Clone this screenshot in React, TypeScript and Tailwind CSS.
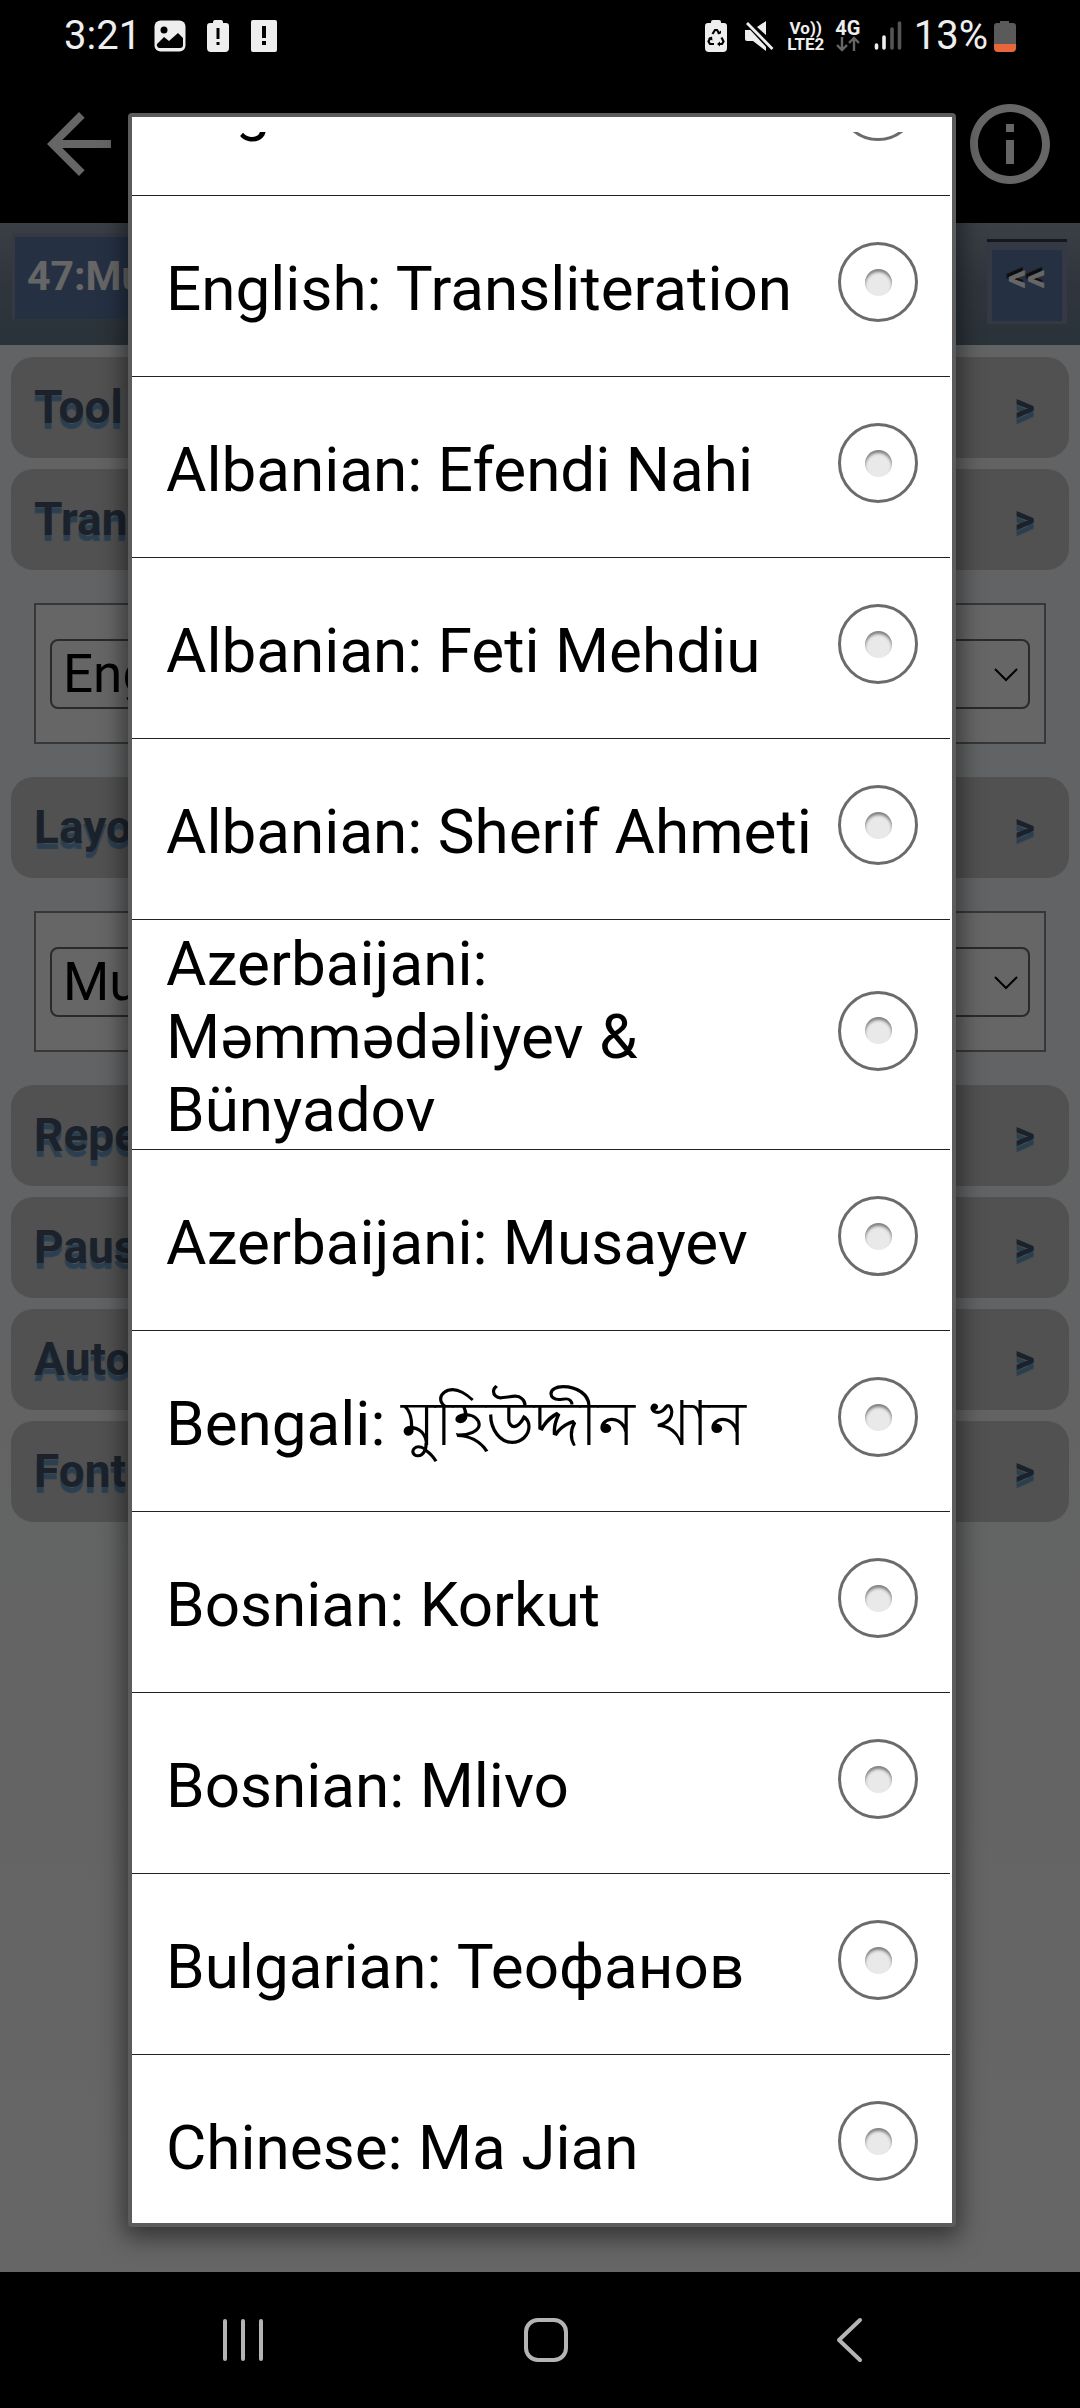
import { useLayoutEffect, useRef, useState } from 'react';

const translations = [
  'English: Shakir',
  'English: Transliteration',
  'Albanian: Efendi Nahi',
  'Albanian: Feti Mehdiu',
  'Albanian: Sherif Ahmeti',
  'Azerbaijani: Məmmədəliyev & Bünyadov',
  'Azerbaijani: Musayev',
  'Bengali: মুহিউদ্দীন খান',
  'Bosnian: Korkut',
  'Bosnian: Mlivo',
  'Bulgarian: Теофанов',
  'Chinese: Ma Jian',
];

function StatusBar() {
  return (
    <div className="flex h-20 items-center justify-between bg-black pl-16 pr-16 pb-2 text-[40px] leading-none text-[#eeeeee]">
      <div className="flex items-center">
        <span className="w-[90px]">3:21</span>
        <svg className="mr-5 size-8" viewBox="0 0 32 32" fill="none">
          <rect x="0.5" y="0.5" width="31" height="31" rx="6" fill="#eee" />
          <circle cx="10" cy="10" r="3.5" fill="#000" />
          <path d="M3 24l7-7 5 4 9-8 5 5v7a3 3 0 0 1-3 3H6a3 3 0 0 1-3-4z" fill="#000" />
        </svg>
        <svg className="mr-5 h-8 w-6" viewBox="0 0 24 32">
          <path d="M7 3V2a2 2 0 0 1 2-2h6a2 2 0 0 1 2 2v1h3a3 3 0 0 1 3 3v22a4 4 0 0 1-4 4H5a4 4 0 0 1-4-4V6a3 3 0 0 1 3-3z" fill="#eee" />
          <path d="M10.5 8h3v11h-3zM10.5 22h3v3h-3z" fill="#000" />
        </svg>
        <svg className="h-[34px] w-7" viewBox="0 0 28 34">
          <rect x="1" y="1" width="26" height="32" rx="2" fill="#eee" />
          <path d="M12 7h4v12h-4zM12 22h4v4h-4z" fill="#000" />
        </svg>
      </div>
      <div className="flex items-center">
        <svg className="mr-4 h-8 w-6" viewBox="0 0 24 32">
          <path d="M7 3V2a2 2 0 0 1 2-2h6a2 2 0 0 1 2 2v1h3a3 3 0 0 1 3 3v22a4 4 0 0 1-4 4H5a4 4 0 0 1-4-4V6a3 3 0 0 1 3-3z" fill="#eee" />
          <path d="M8.5 14l2.5-4h2l2.500 4M17.500 17.500l2 4-1.500 2.500h-4M10 24H6l-1.500-2.500 2-4" fill="none" stroke="#000" strokeWidth="2.200" />
          <path d="M13 13.500h4v-3zM16 21.500v5l-3-2.500zM4 18.500l4-2 .5 4z" fill="#000" />
        </svg>
        <svg className="mr-3 h-8 w-[30px]" viewBox="0 0 30 32">
          <path d="M1 10h6l1.500-1L22 22v9L9 21H3a2 2 0 0 1-2-2zM22 1v14L13 7z" fill="#eee" />
          <path d="M3 2l25 27" stroke="#000" strokeWidth="6" />
          <path d="M3 3l25.500 26" stroke="#eee" strokeWidth="2.800" />
        </svg>
        <span className="mr-2 flex w-10 flex-col items-center text-[17px] leading-[16px] font-bold">
          <span>Vo))</span>
          <span>LTE2</span>
        </span>
        <span className="mr-3 flex w-7 flex-col items-center text-[20px] leading-[16px] font-bold">
          <span>4G</span>
          <svg className="h-4 w-6" viewBox="0 0 24 16" fill="none" stroke="#666" strokeWidth="2.400">
            <path d="M6 1v12M1 9l5 5 5-5M18 15V3M13 7l5-5 5 5" />
          </svg>
        </span>
        <svg className="mr-3 h-[30px] w-7" viewBox="0 0 28 30" strokeLinecap="round" strokeWidth="3.600">
          <path d="M2.500 24v3M10 16v11" stroke="#eee" />
          <path d="M18 8v19M25.500 2v25" stroke="#555" />
        </svg>
        <span className="mr-[6px]">13%</span>
        <svg className="h-8 w-[22px]" viewBox="0 0 22 32">
          <path d="M6 3V1h9v2h4a3 3 0 0 1 3 3v18H0V6a3 3 0 0 1 3-3z" fill="#5a5a5a" />
          <path d="M0 24h22v4a4 4 0 0 1-4 4H4a4 4 0 0 1-4-4z" fill="#e8663c" />
        </svg>
      </div>
    </div>
  );
}

function SectionBar({ title }: { title: string }) {
  return (
    <button
      type="button"
      className="flex h-[101px] w-full items-center justify-between rounded-[22px] bg-[#cbcbcb] pr-[34px] pl-[23px] text-left text-[46px] font-bold text-[#46566e] [text-shadow:0_6px_1px_#6c9ec8]"
    >
      <span>{title}</span>
      <span className="text-[40px]">&gt;</span>
    </button>
  );
}

function SelectBox({ label, value }: { label: string; value: string }) {
  return (
    <div className="mx-[23px] my-[22px] flex h-[141px] items-center border-2 border-[#8a8a8a] bg-white px-[14px]">
      <div className="relative w-full">
        <select
          aria-label={label}
          className="h-[70px] w-full appearance-none rounded-lg border-2 border-[#6a6a6a] bg-white pl-[11px] text-[53px] leading-[64px] text-black"
        >
          <option>{value}</option>
        </select>
        <svg className="pointer-events-none absolute right-3 top-7 h-4 w-6" viewBox="0 0 24 16" fill="none" stroke="#000" strokeWidth="2">
          <path d="M1 2l11 11L23 2" />
        </svg>
      </div>
    </div>
  );
}

function TranslationDialog() {
  const listRef = useRef<HTMLDivElement>(null);
  const [selected, setSelected] = useState<string | null>(null);

  // Open the list scrolled a little past the first option
  useLayoutEffect(() => {
    if (listRef.current) listRef.current.scrollTop = 117;
  }, []);

  return (
    <div className="absolute inset-0 flex justify-center bg-black/60 pt-[33px] pr-4 pb-[45px] pl-5">
      <div
        role="dialog"
        aria-label="Translation"
        className="flex w-full max-w-[828px] flex-col rounded-sm border-4 border-[#5c5c5c] bg-white pt-[15px] shadow-[0_6px_24px_4px_rgba(0,0,0,0.5)]"
      >
        <div ref={listRef} className="min-h-0 flex-1 basis-0 overflow-y-auto pr-[2px] [scrollbar-width:none]">
          {translations.map((name) => (
            <label key={name} className="flex min-h-[181px] items-center justify-between border-b border-[#222] pl-[34px] pr-8">
              <span className="pt-[7px] pb-[3px] text-[62px] leading-[73px] text-black">{name}</span>
              <input
                type="radio"
                name="translation"
                checked={selected === name}
                onChange={() => setSelected(name)}
                className="mb-2 grid size-20 shrink-0 appearance-none place-content-center rounded-full border-[3px] border-[#6b6b6b] before:size-[27px] before:rounded-full before:bg-[#e9e9e9] before:shadow-[inset_0_3px_3px_rgba(0,0,0,0.45)] before:content-[''] checked:before:bg-[#33b5e5]"
              />
            </label>
          ))}
        </div>
      </div>
    </div>
  );
}

export default function App() {
  return (
    <div className="flex min-h-screen flex-col bg-black font-['Roboto','Noto_Sans',sans-serif]">
      <StatusBar />

      <main className="relative flex flex-1 flex-col">
        <header className="flex justify-between bg-black pt-4 pr-[22px] pb-[31px] pl-[31px] text-white">
          <button type="button" aria-label="Back">
            <svg className="size-24" viewBox="0 0 24 24" fill="currentColor">
              <path d="M20 11H7.830l5.590-5.590L12 4l-8 8 8 8 1.410-1.410L7.830 13H20v-2z" />
            </svg>
          </button>
          <button type="button" aria-label="Info">
            <svg className="size-24" viewBox="0 0 24 24" fill="currentColor">
              <path d="M11 7h2v2h-2zm0 4h2v6h-2zm1-9C6.480 2 2 6.480 2 12s4.480 10 10 10 10-4.480 10-10S17.520 2 12 2zm0 18c-4.410 0-8-3.590-8-8s3.590-8 8-8 8 3.590 8 8-3.590 8-8 8z" />
            </svg>
          </button>
        </header>

        {/* Chapter bar */}
        <div className="flex h-[122px] items-start justify-between bg-linear-to-b from-[#939fb0] via-[#79869a] to-[#69808f] pt-[10px] pr-[13px] pl-3 font-bold text-white">
          <button type="button" className="h-[86px] w-[480px] border-t-4 border-l-[3px] border-[#8390a8] bg-[#5c7aa8] px-3 pb-[2px] text-left text-[41px]">
            47:Muhammad
          </button>
          <button
            type="button"
            className="mt-[9px] h-[82px] w-20 border-x-[5px] border-t-8 border-b-[3px] border-[#8390a8] bg-[#5c7aa8] pb-4 text-[38px] leading-none shadow-[0_-3px_0_#333a48] [text-shadow:-2px_-3px_1px_#222]"
          >
            &lt;&lt;
          </button>
        </div>

        {/* Settings */}
        <div className="flex flex-1 flex-col gap-[11px] bg-linear-to-b from-[#f6f7f9] via-[#f6f7f9] to-white px-[11px] pt-3">
          <SectionBar title="Tool bar" />
          <SectionBar title="Translation" />
          <SelectBox label="Translation" value="English: Yusuf Ali" />
          <SectionBar title="Layout" />
          <SelectBox label="Layout" value="Multi line" />
          <SectionBar title="Repeat" />
          <SectionBar title="Pause" />
          <SectionBar title="Auto scroll" />
          <SectionBar title="Font size" />
        </div>

        <TranslationDialog />
      </main>

      <nav className="grid h-[136px] grid-cols-3 items-center justify-items-center bg-black pr-20 pl-[92px]">
        <button type="button" aria-label="Recent apps">
          <svg className="h-12 w-12" viewBox="0 0 48 48" stroke="#b4b4b4" strokeWidth="4" strokeLinecap="round">
            <path d="M6 5v38M24 5v38M42 5v38" />
          </svg>
        </button>
        <button type="button" aria-label="Home">
          <svg className="h-12 w-12" viewBox="0 0 48 48" fill="none" stroke="#b4b4b4" strokeWidth="4">
            <rect x="4" y="4" width="40" height="40" rx="12" />
          </svg>
        </button>
        <button type="button" aria-label="Go back">
          <svg className="h-12 w-12" viewBox="0 0 48 48" fill="none" stroke="#b4b4b4" strokeWidth="4" strokeLinecap="round" strokeLinejoin="round">
            <path d="M35 4L14 24l21 20" />
          </svg>
        </button>
      </nav>
    </div>
  );
}
